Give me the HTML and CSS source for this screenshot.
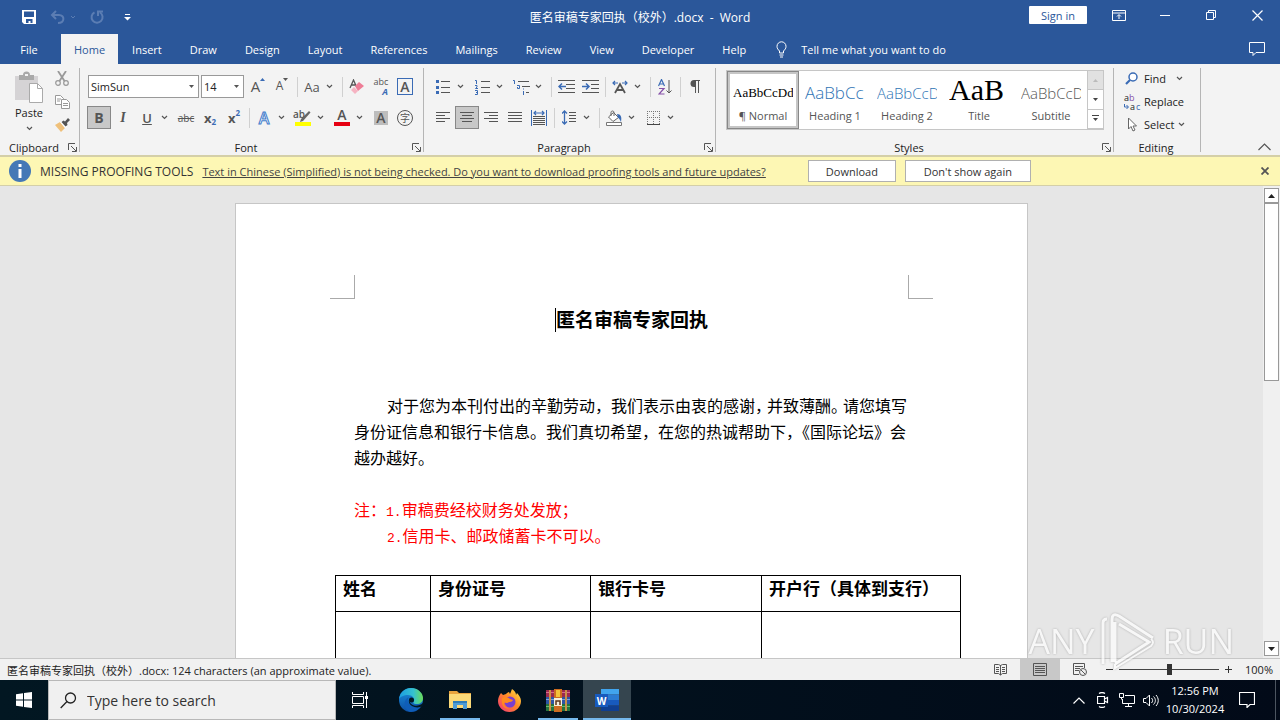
FILE: index.html
```html
<!DOCTYPE html>
<html lang="en">
<head>
    <meta charset="UTF-8">
    <meta name="viewport" content="width=device-width, initial-scale=1.0">
    <title>匿名审稿专家回执（校外）.docx - Word</title>
    <link rel="stylesheet" href="styles.css">
</head>
<body>
    <!-- shared shapes -->
    <svg class="defs" width="0" height="0">
        <symbol id="chev" viewBox="0 0 7 5"><path d="M1 1l2.500 2.500L6 1" fill="none" stroke="#555" stroke-width="1.2"/></symbol>
        <symbol id="tri" viewBox="0 0 5 3"><path d="M0 0h5L2.500 3z" fill="#555"/></symbol>
        <symbol id="launch" viewBox="0 0 9 9"><path d="M.5 7V.5H7M3 3l5 5M8.500 4v4.500H4" fill="none" stroke="#555"/></symbol>
    </svg>

    <header class="titlebar">
        <div class="quick">
            <button class="quick-btn" aria-label="Save"><svg width="14" height="14" viewBox="0 0 14 14"><path d="M0 0h14v14H2l-2-2z" fill="#fff"/><path d="M2 1.500h10V7H2zM4 9h6.500v4H8.500v-2H6.500v2H4z" fill="#2b579a"/></svg></button>
            <button class="quick-btn wide" aria-label="Undo"><svg width="26" height="14" viewBox="0 0 26 14"><path d="M6 1L2 5l4 4M2 5h7c6 0 6 8-1 8" fill="none" stroke="#5b7db3" stroke-width="2"/><path d="M21 6l2 2 2-2" fill="none" stroke="#5b7db3"/></svg></button>
            <button class="quick-btn" aria-label="Redo"><svg width="14" height="14" viewBox="0 0 14 14"><path d="M4.500 2.300A5.500 5.500 0 1 0 10 2.500M8 6V1.500h5" fill="none" stroke="#5b7db3" stroke-width="2"/></svg></button>
            <button class="quick-btn" aria-label="Customize Quick Access Toolbar"><svg width="7" height="7" viewBox="0 0 7 7"><path d="M1 .5h5" stroke="#fff"/><path d="M0 3h7L3.500 6.500z" fill="#fff"/></svg></button>
        </div>
        <h1 class="doc-name">匿名审稿专家回执（校外）.docx &nbsp;-&nbsp; Word</h1>
        <div class="window-tools">
            <button class="signin">Sign in</button>
            <button class="win-btn" aria-label="Ribbon display options"><svg width="14" height="11" viewBox="0 0 14 11"><path d="M.5.5h13v10H.5zM.5 3h13M7 9V5M5 6.500l2-2 2 2" fill="none" stroke="#fff"/></svg></button>
            <button class="win-btn" aria-label="Minimize"><svg width="10" height="11" viewBox="0 0 10 11"><path d="M0 5.500h10" stroke="#fff"/></svg></button>
            <button class="win-btn" aria-label="Restore"><svg width="10" height="10" viewBox="0 0 10 10"><path d="M.5 2.500h7v7h-7zM2.500 2V.5h7v7H8" fill="none" stroke="#fff"/></svg></button>
            <button class="win-btn" aria-label="Close"><svg width="11" height="11" viewBox="0 0 11 11"><path d="M.5.5l10 10M10.500.5l-10 10" stroke="#fff" stroke-width="1.200"/></svg></button>
        </div>
    </header>

    <nav class="tabs">
        <button class="tab file">File</button>
        <button class="tab active">Home</button>
        <button class="tab">Insert</button>
        <button class="tab">Draw</button>
        <button class="tab">Design</button>
        <button class="tab">Layout</button>
        <button class="tab">References</button>
        <button class="tab">Mailings</button>
        <button class="tab">Review</button>
        <button class="tab">View</button>
        <button class="tab">Developer</button>
        <button class="tab">Help</button>
        <button class="tell"><svg width="11" height="17" viewBox="0 0 11 17"><path d="M3.500 12V10C2 8.500 1 7.500 1 5.300a4.500 4.500 0 0 1 9 0C10 7.500 9 8.500 7.500 10v2zM3.500 14h4M4 16h3" fill="none" stroke="#fff"/></svg>Tell me what you want to do</button>
        <button class="comments" aria-label="Comments"><svg width="16" height="14" viewBox="0 0 16 14"><path d="M.5.5h15v10H7l-3 3v-3H.5z" fill="none" stroke="#fff"/></svg></button>
    </nav>

    <section class="ribbon">
        <div class="group clipboard">
            <div class="group-body">
                <button class="paste">
                    <svg width="30" height="32" viewBox="0 0 30 32"><path d="M1 5h23v24H1z" fill="#d5d3d5"/><path d="M5 4h4a3.500 3.500 0 0 1 7 0h4v5H5z" fill="#a9a9a9"/><path d="M11 3h3v2h-3z" fill="#f3f3f3"/><path d="M15.500 12.500h8l5 5v14h-13z" fill="#fff" stroke="#aaa"/><path d="M23.500 12.500v5h5" fill="none" stroke="#aaa"/></svg>
                    <span>Paste</span>
                    <svg width="7" height="5"><use href="#chev"/></svg>
                </button>
                <div class="clip-side">
                    <button class="tool" aria-label="Cut"><svg width="14" height="15" viewBox="0 0 14 15"><path d="M3 0l6.500 10M11 0L4.500 10" stroke="#999" stroke-width="1.800"/><circle cx="3" cy="12" r="2.300" fill="none" stroke="#999" stroke-width="1.200"/><circle cx="11" cy="12" r="2.300" fill="none" stroke="#999" stroke-width="1.200"/></svg></button>
                    <button class="tool" aria-label="Copy"><svg width="15" height="14" viewBox="0 0 15 14"><path d="M.5.5h5l3 3v6h-8z" fill="#fff" stroke="#999"/><path d="M2 4h4M2 6h3" stroke="#999"/><path d="M6.500 4.500h5l3 3v6h-8z" fill="#fff" stroke="#999"/><path d="M8 8.500h5M8 10.500h5" stroke="#999"/></svg></button>
                    <button class="tool" aria-label="Format Painter"><svg width="15" height="14" viewBox="0 0 15 14"><path d="M0 7l5-3 5 6-4 4z" fill="#efc07a"/><path d="M5 4l2-1 5 6-2 1z" fill="#fff"/><path d="M6.500 4l2-1.500 1.500 1L13 0l2 2-3 3 .5 2-2 1.500z" fill="#555"/></svg></button>
                </div>
            </div>
            <div class="group-label"><span>Clipboard</span><svg width="9" height="9"><use href="#launch"/></svg></div>
        </div>

        <div class="group font">
            <div class="group-body rows">
                <div class="row">
                    <label class="combo name"><select aria-label="Font"><option>SimSun</option></select><svg width="5" height="3"><use href="#tri"/></svg></label>
                    <label class="combo size"><select aria-label="Font Size"><option>14</option></select><svg width="5" height="3"><use href="#tri"/></svg></label>
                    <button class="tool glyph up">A<svg width="5" height="3" viewBox="0 0 5 3"><path d="M0 3h5L2.500 0z" fill="#3a6bb5"/></svg></button>
                    <button class="tool glyph up small">A<svg width="5" height="3" viewBox="0 0 5 3"><path d="M0 0h5L2.500 3z" fill="#555"/></svg></button>
                    <i class="sep"></i>
                    <button class="tool glyph case">Aa</button><button class="drop" aria-label="Case options"><svg width="7" height="5"><use href="#chev"/></svg></button>
                    <i class="sep"></i>
                    <button class="tool" aria-label="Clear Formatting"><svg width="16" height="16" viewBox="0 0 16 16"><path d="M1 9L4.500 1 8 9M2.500 6h4" fill="none" stroke="#555" stroke-width="1.300"/><path d="M2 11l3-3 4 4-3 3z" fill="#f6b3c2"/><path d="M6 7l4-4 5 4-6 5z" fill="#ee7d96"/></svg></button>
                    <button class="tool phonetic"><span>abc</span><b>A</b></button>
                    <button class="tool glyph"><span class="boxed">A</span></button>
                </div>
                <div class="row">
                    <button class="tool glyph bold on">B</button>
                    <button class="tool glyph italic">I</button>
                    <button class="tool glyph under">U</button><button class="drop" aria-label="Underline options"><svg width="7" height="5"><use href="#chev"/></svg></button>
                    <button class="tool strike">abc</button>
                    <button class="tool glyph script">x<sub>2</sub></button>
                    <button class="tool glyph script">x<sup>2</sup></button>
                    <i class="sep"></i>
                    <button class="tool glyph effect">A</button><button class="drop" aria-label="Text effect options"><svg width="7" height="5"><use href="#chev"/></svg></button>
                    <button class="tool marker"><span>ab</span><svg width="16" height="17" viewBox="0 0 16 17"><path d="M6 9L14 1l1.500 1.500L8 11l-3 1z" fill="#666"/><path d="M0 12h16v4H0z" fill="#ff0"/></svg></button><button class="drop" aria-label="Highlight options"><svg width="7" height="5"><use href="#chev"/></svg></button>
                    <button class="tool glyph color">A</button><button class="drop" aria-label="Font color options"><svg width="7" height="5"><use href="#chev"/></svg></button>
                    <button class="tool glyph"><span class="shade">A</span></button>
                    <button class="tool"><span class="enclosed">字</span></button>
                </div>
            </div>
            <div class="group-label"><span>Font</span><svg width="9" height="9"><use href="#launch"/></svg></div>
        </div>

        <div class="group paragraph">
            <div class="group-body rows">
                <div class="row">
                    <button class="tool" aria-label="Bullets"><svg width="14" height="14" viewBox="0 0 14 14"><path d="M5 1.500h9M5 7.500h9M5 12.500h9" stroke="#555"/><path d="M0 0h3v3H0zM0 6h3v3H0zM0 11h3v3H0z" fill="#3a6bb5"/></svg></button><button class="drop" aria-label="Bullet options"><svg width="7" height="5"><use href="#chev"/></svg></button>
                    <button class="tool" aria-label="Numbering"><svg width="15" height="16" viewBox="0 0 15 16"><path d="M6 2.500h9M6 8.500h9M6 13.500h9" stroke="#555"/><path d="M0 1.500h1.500V5M0 6.500h2v1.500L.5 9.500H3M0 11.500h2.500v4H0M1 13.500h1.500" fill="none" stroke="#3a6bb5"/></svg></button><button class="drop" aria-label="Number options"><svg width="7" height="5"><use href="#chev"/></svg></button>
                    <button class="tool" aria-label="Multilevel List"><svg width="17" height="16" viewBox="0 0 17 16"><path d="M5 2.500h11M9 7.500h8M13 13.500h3" stroke="#555"/><path d="M0 1.500h1.500V5M4 6.500h2.500v3H4.500V8M10.500 12v4M10.500 9.500v1" fill="none" stroke="#3a6bb5"/></svg></button><button class="drop" aria-label="List options"><svg width="7" height="5"><use href="#chev"/></svg></button>
                    <i class="sep"></i>
                    <button class="tool" aria-label="Decrease Indent"><svg width="17" height="13" viewBox="0 0 17 13"><path d="M0 .5h17M8 4.500h9M8 8.500h9M0 12.500h17" stroke="#555"/><path d="M8 6.500H1M4 3.500l-3 3 3 3" fill="none" stroke="#3a6bb5" stroke-width="1.500"/></svg></button>
                    <button class="tool" aria-label="Increase Indent"><svg width="17" height="13" viewBox="0 0 17 13"><path d="M0 .5h17M9 4.500h8M9 8.500h8M0 12.500h17" stroke="#555"/><path d="M0 6.500h7M4 3.500l3 3-3 3" fill="none" stroke="#3a6bb5" stroke-width="1.500"/></svg></button>
                    <i class="sep"></i>
                    <button class="tool" aria-label="Asian Layout"><svg width="16" height="14" viewBox="0 0 16 14"><path d="M3 13l5-9 5 9M5 10h6" fill="none" stroke="#555" stroke-width="1.800"/><path d="M6 3H1M3 1L1 3l2 2M10 3h5M13 1l2 2-2 2" fill="none" stroke="#3a6bb5" stroke-width="1.200"/></svg></button><button class="drop" aria-label="Layout options"><svg width="7" height="5"><use href="#chev"/></svg></button>
                    <i class="sep"></i>
                    <button class="tool" aria-label="Sort"><svg width="14" height="16" viewBox="0 0 14 16"><path d="M.5 7L3.500.5 6.500 7M1.500 5h4" fill="none" stroke="#3a6bb5" stroke-width="1.200"/><path d="M1 9.500h5l-5 5.500h5.500" fill="none" stroke="#8550a8" stroke-width="1.200"/><path d="M11 1v13M8.500 11.500L11 14l2.500-2.500" fill="none" stroke="#555"/></svg></button>
                    <i class="sep"></i>
                    <button class="tool" aria-label="Show paragraph marks"><svg width="10" height="13" viewBox="0 0 10 13"><path d="M10 .5H4M5.500 1v12M8.500 1v12" stroke="#555" fill="none"/><path d="M5.500 0H4a3.500 3.500 0 0 0 0 7h1.500z" fill="#555"/></svg></button>
                </div>
                <div class="row">
                    <button class="tool" aria-label="Align Left"><svg width="14" height="11" viewBox="0 0 14 11"><path d="M0 .5h14M0 3.500h9M0 6.500h14M0 9.500h9" stroke="#555"/></svg></button>
                    <button class="tool on" aria-label="Center"><svg width="14" height="11" viewBox="0 0 14 11"><path d="M0 .5h14M2 3.500h10M0 6.500h14M2 9.500h10" stroke="#555"/></svg></button>
                    <button class="tool" aria-label="Align Right"><svg width="14" height="11" viewBox="0 0 14 11"><path d="M0 .5h14M5 3.500h9M0 6.500h14M5 9.500h9" stroke="#555"/></svg></button>
                    <button class="tool" aria-label="Justify"><svg width="14" height="11" viewBox="0 0 14 11"><path d="M0 .5h14M0 3.500h14M0 6.500h14M0 9.500h14" stroke="#555"/></svg></button>
                    <button class="tool" aria-label="Distributed"><svg width="16" height="16" viewBox="0 0 16 16"><path d="M.5 0v16M15.500 0v16" stroke="#3a6bb5"/><path d="M3 3h10M5 1L3 3l2 2M11 1l2 2-2 2" stroke="#3a6bb5" fill="none" stroke-width="1.200"/><path d="M2 6.500h12M2 8.500h12M2 10.500h12M2 12.500h12M2 14.500h12" stroke="#555"/></svg></button>
                    <i class="sep"></i>
                    <button class="tool" aria-label="Line Spacing"><svg width="14" height="15" viewBox="0 0 14 15"><path d="M7 2.500h7M7 5.500h7M7 8.500h7M7 11.500h7" stroke="#555"/><path d="M2.500 1v13M0 3.500L2.500 1 5 3.500M0 11.500L2.500 14 5 11.500" fill="none" stroke="#3a6bb5" stroke-width="1.300"/></svg></button><button class="drop" aria-label="Spacing options"><svg width="7" height="5"><use href="#chev"/></svg></button>
                    <i class="sep"></i>
                    <button class="tool" aria-label="Shading"><svg width="16" height="16" viewBox="0 0 16 16"><path d="M7.500 2.500l5 5-5.500 4-4.500-4.500z" fill="#fff" stroke="#666"/><path d="M5 6V2.500c0-2 3-2 3 0V6" fill="none" stroke="#666"/><path d="M11 4c4 0 5 3 4 8-1-2-2-4-3-4z" fill="#3a6bb5"/><path d="M.5 12.500h15v3H.5z" fill="#fff" stroke="#777"/></svg></button><button class="drop" aria-label="Shading options"><svg width="7" height="5"><use href="#chev"/></svg></button>
                    <button class="tool" aria-label="Borders"><svg width="13" height="14" viewBox="0 0 13 14"><path d="M0 .5h13M0 6.500h13M.5 0v13M6.500 0v13M12.500 0v13" stroke="#777" stroke-dasharray="1 1"/><path d="M0 13.500h13" stroke="#444"/></svg></button><button class="drop" aria-label="Border options"><svg width="7" height="5"><use href="#chev"/></svg></button>
                </div>
            </div>
            <div class="group-label"><span>Paragraph</span><svg width="9" height="9"><use href="#launch"/></svg></div>
        </div>

        <div class="group styles">
            <div class="group-body">
                <div class="gallery">
                    <button class="style-item chosen"><span class="sample normal">AaBbCcDd</span><span>¶ Normal</span></button>
                    <button class="style-item"><span class="sample heading1">AaBbCc</span><span>Heading 1</span></button>
                    <button class="style-item"><span class="sample heading2">AaBbCcD</span><span>Heading 2</span></button>
                    <button class="style-item"><span class="sample title">AaB</span><span>Title</span></button>
                    <button class="style-item"><span class="sample subtitle">AaBbCcD</span><span>Subtitle</span></button>
                    <div class="gallery-nav">
                        <button class="off" aria-label="Previous row"><svg width="5" height="3" viewBox="0 0 5 3"><path d="M0 3h5L2.500 0z" fill="#bbb"/></svg></button>
                        <button aria-label="Next row"><svg width="5" height="3" viewBox="0 0 5 3"><path d="M0 0h5L2.500 3z" fill="#444"/></svg></button>
                        <button aria-label="More styles"><svg width="7" height="7" viewBox="0 0 7 7"><path d="M0 .5h7" stroke="#444"/><path d="M1 3h5L3.500 6z" fill="#444"/></svg></button>
                    </div>
                </div>
            </div>
            <div class="group-label"><span>Styles</span><svg width="9" height="9"><use href="#launch"/></svg></div>
        </div>

        <div class="group editing">
            <div class="group-body">
                <button class="edit-btn"><svg width="16" height="14" viewBox="0 0 16 14"><circle cx="9" cy="5" r="4" fill="#fff" stroke="#3a6bb5" stroke-width="1.500"/><path d="M6 8l-4 4" stroke="#3a6bb5" stroke-width="2.200"/></svg>Find<svg class="far" width="7" height="5"><use href="#chev"/></svg></button>
                <button class="edit-btn"><span class="swap"><span>a<em>b</em></span><span class="to"><svg width="5" height="5" viewBox="0 0 5 5"><path d="M.5 0v3H4M2.500 1l2 2-2 2" fill="none" stroke="#3a6bb5"/></svg>a<u>c</u></span></span>Replace</button>
                <button class="edit-btn"><svg width="16" height="15" viewBox="0 0 16 15"><path d="M4.500 1v11l2.500-2.500 2 4.500 2-1-2-4h3.500z" fill="#fff" stroke="#666"/></svg>Select<svg width="7" height="5"><use href="#chev"/></svg></button>
            </div>
            <div class="group-label"><span>Editing</span></div>
        </div>
        <button class="collapse" aria-label="Collapse the Ribbon"><svg width="13" height="8" viewBox="0 0 13 8"><path d="M.5 7l6-6 6 6" fill="none" stroke="#555" stroke-width="1.200"/></svg></button>
    </section>

    <section class="message">
        <svg width="22" height="22" viewBox="0 0 22 22"><circle cx="11" cy="11" r="11" fill="#4478b6"/><path d="M9.500 4h3v3h-3zM9.500 9h3v9h-3z" fill="#fff"/></svg>
        <span class="message-title">MISSING PROOFING TOOLS</span>
        <a href="#">Text in Chinese (Simplified) is not being checked. Do you want to download proofing tools and future updates?</a>
        <button class="download">Download</button>
        <button class="dismiss">Don't show again</button>
        <button class="message-close" aria-label="Close"><svg width="8" height="8" viewBox="0 0 8 8"><path d="M.5.5l7 7M7.500.5l-7 7" stroke="#555" stroke-width="1.800"/></svg></button>
    </section>

    <main class="workspace">
        <div class="canvas">
            <article class="page">
                <div class="marks"><i class="mark left"></i><i class="mark right"></i></div>
                <h2><i class="caret"></i>匿名审稿专家回执</h2>
                <p class="intro" lang="zh-CN"><span class="indent">对于您为本刊付出的辛勤劳动，我们表示由衷的感谢<span class="tight">，</span>并致薄酬<span class="tight">。</span>请您填写</span><br>身份证信息和银行卡信息。我们真切希望，在您的热诚帮助下，《国际论坛》会<br>越办越好。</p>
                <div class="notes" lang="zh-CN">
                    <p>注：<span class="num">1.</span>审稿费经校财务处发放；</p>
                    <p class="indent"><span class="num">2.</span>信用卡、邮政储蓄卡不可以。</p>
                </div>
                <table>
                    <colgroup><col class="c1"><col class="c2"><col class="c3"><col class="c4"></colgroup>
                    <tr><th>姓名</th><th>身份证号</th><th>银行卡号</th><th>开户行（具体到支行）</th></tr>
                    <tr class="blank"><td></td><td></td><td></td><td></td></tr>
                </table>
            </article>
        </div>
        <div class="scrollbar">
            <button aria-label="Scroll up"><svg width="7" height="4" viewBox="0 0 7 4"><path d="M0 4h7L3.500 0z" fill="#222"/></svg></button>
            <div class="thumb"></div>
            <button class="down" aria-label="Scroll down"><svg width="7" height="4" viewBox="0 0 7 4"><path d="M0 0h7L3.500 4z" fill="#222"/></svg></button>
        </div>
    </main>

    <footer class="status">
        <span class="status-text">匿名审稿专家回执（校外）.docx: 124 characters (an approximate value).</span>
        <button class="view" aria-label="Read Mode"><svg width="13" height="13" viewBox="0 0 13 13"><path d="M.5 1.500h4l2 1 2-1h4v9h-4l-2 1.500-2-1.500h-4zM6.500 2v10M2 4.500h3M2 6.500h3M2 8.500h3M8 4.500h3M8 6.500h3M8 8.500h3" fill="none" stroke="#555"/></svg></button>
        <button class="view current" aria-label="Print Layout"><svg width="14" height="13" viewBox="0 0 14 13"><path d="M.5.5h13v12H.5zM2 3.500h10M2 5.500h10M2 7.500h10M2 9.500h10" fill="none" stroke="#555"/></svg></button>
        <button class="view" aria-label="Web Layout"><svg width="14" height="13" viewBox="0 0 14 13"><path d="M6 11.500H.5V.5h11V5M2 3.500h8M2 5.500h5M2 7.500h4" fill="none" stroke="#555"/><circle cx="10" cy="9" r="3.500" fill="#eee" stroke="#555"/><path d="M8 7l4 4" stroke="#555"/></svg></button>
        <button class="zoom-btn" aria-label="Zoom out"><svg width="7" height="7" viewBox="0 0 7 7"><path d="M0 3.500h7" stroke="#333"/></svg></button>
        <input class="zoom" type="range" min="0" max="100" value="50" aria-label="Zoom">
        <button class="zoom-btn" aria-label="Zoom in"><svg width="7" height="7" viewBox="0 0 7 7"><path d="M0 3.500h7M3.500 0v7" stroke="#333"/></svg></button>
        <span class="percent">100%</span>
    </footer>

    <div class="taskbar">
        <button class="start" aria-label="Start"><svg width="16" height="16" viewBox="0 0 16 16"><path d="M0 2.300L7 1.300v6.200H0zM8 1.100L16 0v7.500H8zM0 8.500h7v6.200l-7-1zM8 8.500h8V16l-8-1.100z" fill="#fff"/></svg></button>
        <label class="search"><svg width="17" height="17" viewBox="0 0 17 17"><circle cx="10.500" cy="6" r="5" fill="none" stroke="#222" stroke-width="1.300"/><path d="M7 9.500L.7 16" stroke="#222" stroke-width="1.300"/></svg><input type="text" placeholder="Type here to search" aria-label="Search"></label>
        <button class="app view-btn" aria-label="Task View"><svg width="17" height="16" viewBox="0 0 17 16"><path d="M.5 4.500h11v7H.5zM.5 0v2.500h11V0M.5 16v-2.500h11V16" fill="none" stroke="#fff"/><path d="M14.500 0v16" stroke="#fff"/><path d="M13 4h3v3h-3z" fill="#fff"/></svg></button>
        <button class="app" aria-label="Edge"><svg width="24" height="24" viewBox="0 0 24 24">
            <defs><linearGradient id="e1" x1="0" x2="1"><stop offset="0" stop-color="#1b9de2"/><stop offset=".6" stop-color="#35c1d0"/><stop offset="1" stop-color="#6bdc57"/></linearGradient><linearGradient id="e2" y2="1" x2="0"><stop offset="0" stop-color="#1b8fdc"/><stop offset="1" stop-color="#0c4fa5"/></linearGradient></defs>
            <circle cx="12" cy="12" r="12" fill="url(#e2)"/><path d="M0 11C1 4 6 0 12 0c7 0 12 5 12 10 0 4-3 6-6 6-4 0-4-1-3-3 1-3-2-6-6-6-4 0-8 2-9 4z" fill="url(#e1)"/><path d="M10 9c-3 3-1 9 5 10 3 .5 5-.5 7-2-2 5-7 7.500-12 6.500-6-3-6-12 0-14.500z" fill="#0f5db8"/><path d="M12 9c-3 2-2 7 3 8.500 3 .8 6 0 9-2.500v3l-3 1c-3 1-6 0-8-1-4-2-4-7-1-9z" fill="#021722"/><circle cx="12.500" cy="12" r="2.500" fill="#021722"/></svg></button>
        <button class="app open" aria-label="File Explorer"><svg width="22" height="20" viewBox="0 0 22 20"><path d="M0 1h8l2 2h12v4H0z" fill="#e8a33d"/><path d="M0 4h22v14H0z" fill="#fbd978"/><path d="M4 19v-8h14v8h-4v-4H8v4z" fill="#4c9bd6"/><path d="M4 11h14v2H4z" fill="#2d7cb9"/></svg></button>
        <button class="app" aria-label="Firefox"><svg width="23" height="23" viewBox="0 0 23 23">
            <defs><linearGradient id="f1" x1="1" y1="0" x2="0" y2="1"><stop offset="0" stop-color="#ffe94a"/><stop offset=".45" stop-color="#ff8b25"/><stop offset="1" stop-color="#f0307c"/></linearGradient></defs>
            <path d="M3 4l2 2 3-1c1-1 2-2 3-2l1 2 2-5c3 2 4 4 4 6l1-2c2 2 4 5 4 8 0 6-5 11-11.500 11S0 18 0 12c0-3 1-5 3-8z" fill="url(#f1)"/><circle cx="12" cy="13" r="5.500" fill="#7a3fd0"/><path d="M4 9c3-2 6-1 8 1l3 1c-1 2-3 2-4 2-2 2-4 0-5 1 0 3 2 5 6 5-6 2-9-3-8-10z" fill="#ff8a1f"/></svg></button>
        <button class="app open" aria-label="WinRAR"><svg width="24" height="23" viewBox="0 0 24 23"><path d="M0 1h24v7H0z" fill="#9c2950"/><path d="M0 3h24v1H0z" fill="#d56c8c"/><path d="M0 8h24v7H0z" fill="#2d55a5"/><path d="M0 10h24v1H0z" fill="#7ba2de"/><path d="M0 15h24v7H0z" fill="#26733d"/><path d="M0 17h24v1H0z" fill="#66ba71"/><path d="M3 1h2v21H3zM19 1h2v21h-2z" fill="#c98f48"/><path d="M8 0h8v23H8z" fill="#cc6c20"/><path d="M10 1h4v7h-4z" fill="#f4c23a"/><path d="M8 9h8v8H8z" fill="#f5ecd8"/><path d="M10 16v-4h4v4M10 12h4" fill="none" stroke="#5b3518" stroke-width="1.500"/></svg></button>
        <button class="app open current" aria-label="Word"><svg width="24" height="22" viewBox="0 0 24 22"><path d="M6 0h18v5.500H6z" fill="#41a5ee"/><path d="M6 5.500h18V11H6z" fill="#2b7cd3"/><path d="M6 11h18v5.500H6z" fill="#185abd"/><path d="M6 16.500h18V22H6z" fill="#103f91"/><path d="M0 5h13v13H0z" fill="#185abd"/><text x="6.500" y="15.500" text-anchor="middle" class="w-letter">W</text></svg></button>
        <div class="tray">
            <button aria-label="Hidden icons"><svg width="12" height="7" viewBox="0 0 12 7"><path d="M.5 6.500L6 1l5.500 5.500" fill="none" stroke="#fff" stroke-width="1.200"/></svg></button>
            <button aria-label="Camera"><svg width="12" height="16" viewBox="0 0 12 16"><path d="M.5 4.500h7v7h-7zM7.500 7l3-1.500v5L7.500 9M2 1.500c2-1.300 4-1.300 6 0M2 14.500c2 1.300 4 1.300 6 0" fill="none" stroke="#fff" stroke-width="1.200"/></svg></button>
            <button aria-label="Network"><svg width="16" height="14" viewBox="0 0 16 14"><path d="M6 2.500h9.500v8H3.500V6M9.500 10.500v3M6 13.500h7M.5.500h4v4h-4zM2.500 4.500v2" fill="none" stroke="#fff"/></svg></button>
            <button aria-label="Volume"><svg width="16" height="13" viewBox="0 0 16 13"><path d="M.5 4.500H3L6.500 1v11L3 8.500H.5zM8.500 4c1.500 1.500 1.500 3.500 0 5M10.500 2.500c2.500 2.500 2.500 5.500 0 8M13 1c3 3.500 3 7.500 0 11" fill="none" stroke="#fff"/></svg></button>
            <div class="clock"><span>12:56 PM</span><span>10/30/2024</span></div>
            <button class="notify" aria-label="Notifications"><svg width="16" height="16" viewBox="0 0 16 16"><path d="M.5.5h15v12H11L8 15.500V12.500H.5z" fill="none" stroke="#fff" stroke-width="1.200"/></svg></button>
            <i class="peek"></i>
        </div>
    </div>

    <div class="watermark">
        <span>ANY</span>
        <svg width="56" height="62" viewBox="0 0 56 62"><path d="M2 54V13q0-4 4-4M11 52V10q0-8 7-4l34 22M14 12v40M18 14l30 18-34 22" fill="none" stroke="#fff" stroke-width="3"/><path d="M14 54v4l36-22q4-4 0-7" fill="none" stroke="#fff" stroke-width="2"/></svg>
        <span>RUN</span>
    </div>
</body>
</html>
```

FILE: styles.css
```css
* {
    box-sizing: border-box;
}
body {
    margin: 0;
    height: 100vh;
    overflow: hidden;
    display: flex;
    flex-direction: column;
    font-family: 'Open Sans', 'Noto Sans CJK SC', sans-serif;
    font-size: 11px;
    color: #333;
    background-color: #e6e6e6;
}
button, input, select {
    font: inherit;
    color: inherit;
    border: 0;
    padding: 0;
    margin: 0;
    background: none;
}
svg {
    display: block;
    flex: none;
}
.defs {
    position: absolute;
}

/* title bar */
.titlebar {
    display: grid;
    grid-template-columns: 1fr auto 1fr;
    align-items: center;
    height: 34px;
    flex: none;
    background-color: #2b579a;
    color: white;
}
.quick {
    display: flex;
    align-items: center;
    padding-left: 14px;
}
.quick-btn {
    width: 30px;
    height: 24px;
    display: flex;
    align-items: center;
    justify-content: center;
}
.quick-btn.wide {
    width: 38px;
}
.doc-name {
    margin: 0;
    font-size: 12px;
    font-weight: normal;
}
.window-tools {
    display: flex;
    align-items: center;
    justify-content: flex-end;
    height: 30px;
    align-self: start;
}
.signin {
    width: 58px;
    height: 18px;
    margin-right: 9px;
    background-color: white;
    color: #2b579a;
    border-radius: 1px;
}
.win-btn {
    width: 46px;
    height: 30px;
    display: flex;
    align-items: center;
    justify-content: center;
}

/* tabs */
.tabs {
    display: flex;
    height: 30px;
    flex: none;
    background-color: #2b579a;
    color: white;
}
.tab {
    padding: 0 14px;
}
.tab.file {
    width: 61px;
    padding: 0 3px 0 0;
}
.tab.active {
    padding: 0 13px;
    background-color: #f3f3f3;
    color: #2b579a;
}
.tell {
    display: flex;
    align-items: center;
    gap: 14px;
    margin-left: 16px;
}
.comments {
    margin-left: auto;
    width: 46px;
    display: flex;
    align-items: center;
    justify-content: center;
}

/* ribbon */
.ribbon {
    display: flex;
    height: 93px;
    flex: none;
    background-color: #f3f3f3;
    border-bottom: 2px solid #d4cfa8;
}
.group {
    display: flex;
    flex-direction: column;
    position: relative;
}
.group::after {
    content: '';
    position: absolute;
    right: 0;
    top: 4px;
    bottom: 3px;
    border-right: 1px solid #b5b5b5;
}
.group-body {
    height: 76px;
    display: flex;
}
.group-label {
    display: flex;
    align-items: center;
    height: 15px;
    padding-right: 3px;
    color: #222;
}
.group-label span {
    flex: 1;
    text-align: center;
}
.clipboard {
    width: 80px;
}
.font {
    width: 344px;
}
.paragraph {
    width: 292px;
}
.styles {
    width: 398px;
}
.editing {
    width: 87px;
}
.paste {
    width: 42px;
    margin-left: 8px;
    padding-top: 7px;
    display: flex;
    flex-direction: column;
    align-items: center;
    color: #222;
}
.paste span {
    margin: 2px 0 6px;
}
.clip-side {
    padding-top: 3px;
}
.tool {
    width: 24px;
    height: 23px;
    display: flex;
    align-items: center;
    justify-content: center;
    color: #555;
    flex: none;
}
.tool.on {
    background-color: #c8c8c8;
    border: 1px solid #888;
}
.drop {
    width: 15px;
    padding-left: 2px;
    height: 23px;
    display: flex;
    align-items: center;
    flex: none;
}
.sep {
    width: 6px;
    height: 20px;
    flex: none;
    background: linear-gradient(#d0d0d0, #d0d0d0) center / 1px 100% no-repeat;
}
.rows {
    flex-direction: column;
    gap: 8px;
    padding: 11px 0 0 7px;
}
.row {
    display: flex;
    align-items: center;
}
.combo {
    display: flex;
    align-items: center;
    height: 23px;
    padding: 0 4px 0 2px;
    margin-left: 1px;
    background-color: white;
    border: 1px solid #999;
    color: #222;
}
.combo select {
    appearance: none;
    flex: 1;
    min-width: 0;
    outline: 0;
}
.combo.name {
    width: 111px;
}
.combo.size {
    width: 43px;
    margin: 0 2px;
}
.glyph {
    font-size: 14px;
    font-weight: 600;
}
.glyph.up {
    font-size: 15px;
    align-items: flex-start;
    line-height: 22px;
    font-weight: normal;
}
.glyph.up.small {
    font-size: 12px;
}
.glyph.up svg {
    margin-top: 3px;
}
.glyph.case {
    font-size: 13px;
    font-weight: normal;
}
.phonetic {
    flex-direction: column;
    font-size: 9px;
    line-height: 10px;
}
.phonetic b {
    color: #3a6bb5;
    font-style: italic;
    margin-left: 8px;
}
.boxed {
    border: 1px solid #3a6bb5;
    width: 16px;
    line-height: 15px;
}
.bold {
    font-weight: bold;
}
.italic {
    font-family: 'Liberation Serif', serif;
    font-style: italic;
}
.under {
    text-decoration: underline;
    font-size: 13px;
}
.strike {
    font-size: 10px;
    text-decoration: line-through;
}
.script {
    font-size: 13px;
    font-weight: bold;
}
.script sub, .script sup {
    font-size: 8px;
    color: #3a6bb5;
    line-height: 8px;
}
.script sub {
    align-self: flex-end;
    margin-bottom: 3px;
}
.script sup {
    align-self: flex-start;
    margin-top: 3px;
}
.effect {
    color: white;
    font-size: 16px;
    -webkit-text-stroke: 1px #3f7ccc;
}
.marker {
    position: relative;
    font-size: 10px;
    font-weight: 600;
}
.marker span {
    margin: 0 8px 8px 0;
}
.marker svg {
    position: absolute;
    left: 4px;
    top: 4px;
}
.color {
    flex-direction: column;
    line-height: 12px;
}
.color::after {
    content: '';
    width: 16px;
    height: 4px;
    margin-top: 1px;
    background-color: #e60012;
}
.shade {
    width: 14px;
    line-height: 14px;
    background-color: #bdbdbd;
}
.enclosed {
    width: 16px;
    height: 16px;
    line-height: 14px;
    border: 1px solid #555;
    border-radius: 50%;
    font-size: 10px;
}

/* style gallery */
.gallery {
    display: flex;
    height: 60px;
    margin: 6px 0 0 10px;
    background-color: white;
    border: 1px solid #c6c6c6;
}
.style-item {
    width: 72px;
    padding: 4px 6px;
    display: flex;
    flex-direction: column;
    align-items: center;
    color: #555;
}
.style-item.chosen {
    padding: 1px 3px;
    border: 3px solid #c6c6c6;
    outline: 1px solid #888;
    outline-offset: -1px;
}
.sample {
    width: 60px;
    height: 33px;
    line-height: 36px;
    overflow: hidden;
    white-space: nowrap;
    text-align: left;
}
.sample.normal {
    font-family: 'Liberation Serif', serif;
    font-size: 13px;
    color: black;
}
.sample.heading1 {
    font-size: 17px;
    font-weight: 300;
    color: #2e74b5;
}
.sample.heading2 {
    font-size: 15px;
    font-weight: 300;
    color: #2e74b5;
}
.sample.title {
    font-family: 'Liberation Serif', serif;
    font-size: 30px;
    line-height: 30px;
    color: black;
}
.sample.subtitle {
    font-size: 15px;
    font-weight: 300;
}
.gallery-nav {
    display: flex;
    flex-direction: column;
    width: 16px;
    border-left: 1px solid #c6c6c6;
}
.gallery-nav button {
    flex: 1;
    display: flex;
    align-items: center;
    justify-content: center;
    border-bottom: 1px solid #c6c6c6;
}
.gallery-nav .off {
    background-color: #e1e1e1;
}
.editing .group-body {
    flex-direction: column;
    padding: 3px 0 0 10px;
}
.edit-btn {
    display: flex;
    align-items: center;
    gap: 4px;
    height: 23px;
    color: #222;
}
.edit-btn .far {
    margin-left: 6px;
}
.swap {
    display: flex;
    flex-direction: column;
    width: 16px;
    font-size: 9px;
    line-height: 9px;
    text-align: left;
}
.swap em {
    font-style: normal;
    color: #8550a8;
}
.swap u {
    text-decoration: none;
    color: #3a6bb5;
}
.swap .to {
    display: flex;
    align-items: center;
    gap: 1px;
}
.collapse {
    margin: auto 9px 4px auto;
}

/* message bar */
.message {
    display: flex;
    align-items: center;
    height: 29px;
    flex: none;
    padding: 0 11px 0 9px;
    background-color: #fdf7b4;
    border-bottom: 1px solid #d4cfa8;
    white-space: nowrap;
}
.message-title {
    margin: 0 9px;
    font-size: 12px;
}
.message a {
    color: #444;
}
.message button {
    height: 22px;
}
.message .download, .message .dismiss {
    background-color: white;
    border: 1px solid #b0b0b0;
}
.download {
    width: 88px;
    margin: 0 9px 0 42px;
}
.dismiss {
    width: 126px;
}
.message-close {
    margin-left: auto;
}

/* document area */
.workspace {
    flex: 1;
    min-height: 0;
    display: flex;
}
.canvas {
    flex: 1;
    overflow: hidden;
    padding-top: 17px;
}
.page {
    width: 793px;
    height: 1122px;
    margin: 0 auto;
    padding: 71px 118px;
    background-color: white;
    border: 1px solid #c6c6c6;
    font-family: 'Liberation Serif', 'Noto Sans CJK SC', serif;
    font-size: 16px;
    line-height: 26px;
    color: black;
}
.page p {
    margin: 0;
    white-space: nowrap;
}
.marks {
    display: flex;
    justify-content: space-between;
    margin: 0 -24px;
}
.mark {
    width: 25px;
    height: 24px;
    border-bottom: 1px solid #aaa;
}
.mark.left {
    border-right: 1px solid #aaa;
}
.mark.right {
    border-left: 1px solid #aaa;
}
.page h2 {
    display: flex;
    justify-content: center;
    margin: 9px 0 60px;
    font-size: 19px;
    font-weight: bold;
}
.caret {
    width: 1px;
    height: 24px;
    background-color: black;
}
.page .indent {
    padding-left: 33px;
}
.tight {
    margin-right: -4px;
}
.notes {
    margin: 26px 0 25px;
    color: #f00;
}
.num {
    font-family: 'Liberation Mono', monospace;
    font-size: 13px;
    line-height: 1;
}
.page table {
    width: 625px;
    margin-left: -19px;
    table-layout: fixed;
    border-collapse: collapse;
}
.page th, .page td {
    height: 36px;
    padding: 0 7px 8px;
    border: 1px solid black;
    font-size: 17px;
    text-align: left;
    white-space: nowrap;
}
.c1 {
    width: 95px;
}
.c2 {
    width: 160px;
}
.c3 {
    width: 171px;
}
.c4 {
    width: 199px;
}
.page .blank td {
    height: 78px;
}
.scrollbar {
    width: 17px;
    display: flex;
    flex-direction: column;
    padding: 2px 1px;
    background-color: #f0f0f0;
}
.scrollbar button {
    height: 15px;
    display: flex;
    align-items: center;
    justify-content: center;
    background-color: white;
    border: 1px solid #999;
}
.scrollbar .down {
    margin-top: auto;
}
.thumb {
    height: 38%;
    background-color: white;
    border: 1px solid #999;
}

/* status bar */
.status {
    display: flex;
    align-items: center;
    height: 22px;
    flex: none;
    padding: 0 7px;
    background-color: #f1f1f1;
    border-top: 1px solid #c6c6c6;
    color: #222;
}
.status-text {
    margin-right: auto;
}
.view {
    width: 40px;
    height: 21px;
    display: flex;
    align-items: center;
    justify-content: center;
}
.view.current {
    background-color: #c8c8c8;
}
.zoom-btn {
    width: 19px;
    display: flex;
    justify-content: center;
}
.zoom {
    appearance: none;
    width: 100px;
    height: 12px;
    background: linear-gradient(#444, #444) center / 100% 1px no-repeat;
}
.zoom::-webkit-slider-thumb {
    appearance: none;
    width: 5px;
    height: 11px;
    background-color: #333;
}
.percent {
    margin-left: 7px;
}

/* taskbar */
.taskbar {
    display: flex;
    height: 40px;
    flex: none;
    background: linear-gradient(90deg, #021722, #020a18);
    color: white;
}
.start {
    width: 48px;
    display: flex;
    align-items: center;
    justify-content: center;
}
.search {
    width: 288px;
    display: flex;
    align-items: center;
    gap: 10px;
    padding-left: 11px;
    background-color: #f0f0f0;
    border: 1px solid #b8b8b8;
    font-size: 14px;
    color: #333;
}
.search input {
    flex: 1;
    min-width: 0;
    outline: 0;
}
.search input::placeholder {
    color: #333;
}
.app {
    width: 48px;
    margin-right: 1px;
    display: flex;
    align-items: center;
    justify-content: center;
    position: relative;
}
.view-btn {
    margin-right: 3px;
}
.app.open::after {
    content: '';
    position: absolute;
    left: 4px;
    right: 4px;
    bottom: 0;
    height: 2px;
    background-color: #76b9ed;
}
.app.current {
    background-color: #35454f;
}
.app.current::after {
    left: 0;
    right: 0;
}
.w-letter {
    font-size: 10px;
    font-weight: bold;
    fill: white;
}
.tray {
    display: flex;
    align-items: center;
    margin-left: auto;
}
.tray button {
    width: 24px;
    height: 40px;
    display: flex;
    align-items: center;
    justify-content: center;
}
.clock {
    width: 64px;
    display: flex;
    flex-direction: column;
    align-items: center;
    line-height: 18px;
}
.tray .notify {
    width: 40px;
}
.peek {
    height: 40px;
    width: 5px;
    margin-left: 8px;
    border-left: 1px solid #4c5560;
}

/* watermark */
.watermark {
    position: absolute;
    right: 46px;
    bottom: 48px;
    display: flex;
    align-items: center;
    gap: 6px;
    font-size: 34px;
    color: white;
    opacity: 0.7;
    filter: drop-shadow(0 0 1px #999);
    pointer-events: none;
}
.watermark span {
    font-family: 'Liberation Sans Narrow', 'Open Sans', sans-serif;
}
```
